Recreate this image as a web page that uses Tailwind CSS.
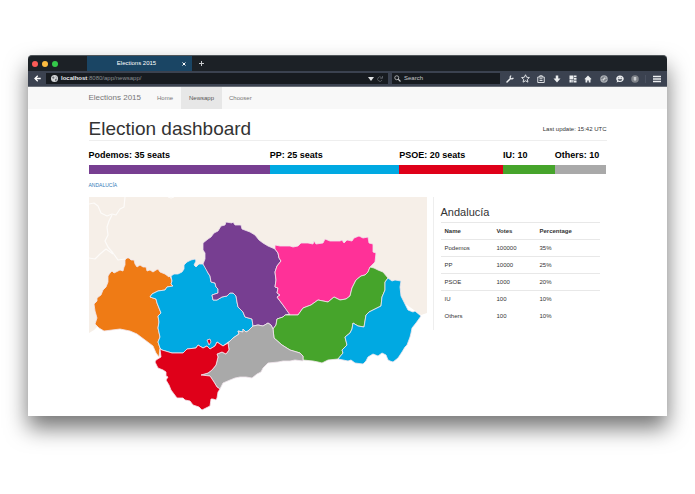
<!DOCTYPE html>
<html lang="en">
<head>
    <meta charset="UTF-8">
    <meta name="viewport" content="width=device-width, initial-scale=1.0">
    <title>Elections 2015</title>
    <script src="https://cdn.jsdelivr.net/npm/@tailwindcss/browser@4"></script>
</head>
<body class="bg-white font-['Liberation_Sans',sans-serif] text-[#333]">

    <div class="px-7 pt-[55px] pb-[78px]">
        <div class="bg-white rounded-t shadow-[0_12px_22px_rgba(0,0,0,0.55)]">

            <!-- Tab strip -->
            <div class="flex items-stretch h-4 bg-[#1c2126] rounded-t border-t border-[#50565a] text-white">
                <div class="flex items-center gap-1 pl-1 w-[59px]">
                    <button aria-label="Close window" class="size-1.5 rounded-full bg-[#fc5b57]"></button>
                    <button aria-label="Minimize window" class="size-1.5 rounded-full bg-[#fdbc40]"></button>
                    <button aria-label="Zoom window" class="size-1.5 rounded-full bg-[#34c84a]"></button>
                </div>
                <div class="flex items-center w-[105px] px-1.5 bg-[#1a4564]">
                    <span class="flex-1 pr-0.5 text-center text-[6px]">Elections 2015</span>
                    <button aria-label="Close tab">
                        <svg class="size-1" viewBox="0 0 8 8" stroke="currentColor" stroke-width="2"><path d="M1 1l6 6M7 1l-6 6"/></svg>
                    </button>
                </div>
                <button aria-label="New tab" class="px-[7px]">
                    <svg class="size-[5px]" viewBox="0 0 10 10" stroke="#c8cbcd" stroke-width="2"><path d="M5 0v10M0 5h10"/></svg>
                </button>
            </div>

            <!-- Toolbar -->
            <div class="flex items-center h-4 py-0.5 bg-[#3b4250] border-b border-[#6b7079] text-[6px] text-[#e8eaec]">
                <button aria-label="Back" class="flex justify-center w-[18px]">
                    <svg class="size-[7px]" viewBox="0 0 14 14" fill="none" stroke="white" stroke-width="2.6"><path d="M7.500 1.500L2 7l5.500 5.500M2 7h11.500"/></svg>
                </button>
                <div class="flex items-center flex-1 h-[11px] px-[5px] mr-1 bg-[#171b20]">
                    <svg class="size-[7px] mr-[3px]" viewBox="0 0 14 14"><circle cx="7" cy="7" r="7" fill="#d4d6d8"/><path d="M2 4l4-1 1 3-3 2zM8 8l4-1-1 4-3 1zM9 2l3 3-2 0z" fill="#6d7276"/></svg>
                    <label for="url" class="font-bold">localhost</label>
                    <input id="url" type="text" value=":8080/app/newsapp/" class="flex-1 min-w-0 text-[#8b8f93] outline-none">
                    <button aria-label="History">
                        <svg class="w-[6px] h-1" viewBox="0 0 12 8" fill="#e1e3e5"><path d="M0 0h12L6 8z"/></svg>
                    </button>
                    <button aria-label="Reload" class="ml-[3px]">
                        <svg class="size-[6px]" viewBox="0 0 12 12" fill="none" stroke="#6b7075" stroke-width="1.500"><path d="M10 8a4.500 4.500 0 1 1-1-5M11 0v4.500H6.500"/></svg>
                    </button>
                </div>
                <div class="flex items-center w-[108px] h-[11px] px-0.5 bg-[#171b20]">
                    <svg class="size-[7px] mr-[3px]" viewBox="0 0 14 14" fill="none" stroke="#c5c8ca" stroke-width="1.600"><circle cx="5.500" cy="5.500" r="4"/><path d="M8.500 8.500L13 13" stroke-width="2.200"/></svg>
                    <input type="search" aria-label="Search" placeholder="Search" class="flex-1 min-w-0 outline-none placeholder:text-[#c5c8ca]">
                </div>
                <div class="flex items-center w-[141px] ml-0.5 text-[#eceef0]">
                    <button aria-label="Developer tools" class="flex flex-1 justify-center">
                        <svg class="size-2" viewBox="0 0 16 16" fill="none" stroke="currentColor"><path d="M2 14l7-7" stroke-width="3" stroke-linecap="round"/><path d="M10.500 1.500a3.200 3.200 0 1 0 4 4" stroke-width="2.500"/></svg>
                    </button>
                    <button aria-label="Bookmark" class="flex flex-1 justify-center">
                        <svg class="size-[9px]" viewBox="0 0 18 18" fill="none" stroke="currentColor" stroke-width="1.800"><path d="M9 1.500l2.300 5 5.500.6-4.100 3.700 1.200 5.500L9 13.500l-4.900 2.800 1.200-5.500L1.200 7.100l5.500-.6z"/></svg>
                    </button>
                    <button aria-label="Bookmarks list" class="flex flex-1 justify-center">
                        <svg class="size-2" viewBox="0 0 16 16" fill="none" stroke="currentColor" stroke-width="1.800"><path d="M1.500 4h13v11h-13zM5.500 4V1.500h5V4M5 7.500h6M5 11h6"/></svg>
                    </button>
                    <button aria-label="Downloads" class="flex flex-1 justify-center">
                        <svg class="size-2" viewBox="0 0 16 16" fill="currentColor"><path d="M5.500 1h5v6H15l-7 8-7-8h4.500z"/></svg>
                    </button>
                    <button aria-label="Tab groups" class="flex flex-1 justify-center">
                        <svg class="size-2" viewBox="0 0 16 16" fill="currentColor"><path d="M1 1h8v7.500H1zM10 1h5v3h-5zM10 5.500h5v4h-5zM1 9.500h4.500V15H1zM6.500 9.500H9V15H6.500zM10 11h5v4h-5z"/></svg>
                    </button>
                    <button aria-label="Home" class="flex flex-1 justify-center">
                        <svg class="size-2" viewBox="0 0 16 16" fill="currentColor"><path d="M8 1l7 7-1.200 1.200L13 8.500V15H9.500v-4h-3v4H3V8.500l-.8.700L1 8z"/></svg>
                    </button>
                    <button aria-label="Edit page" class="flex flex-1 justify-center">
                        <svg class="size-2" viewBox="0 0 16 16"><circle cx="8" cy="8" r="7.500" fill="#a9adb2"/><path d="M4 12l8-8M3 8l5-5M8 13l5-5" stroke="#3b4250" stroke-width="1.500"/><path d="M5 11l6-6" stroke="white" stroke-width="1.500"/></svg>
                    </button>
                    <button aria-label="Chat" class="flex flex-1 justify-center">
                        <svg class="size-2" viewBox="0 0 16 16"><path d="M8 1c4.500 0 7.500 2.800 7.500 6.500S12.500 14 8 14c-1 0-2-.1-2.800-.4L1 15l1.300-3.200C1 10.700.5 9.200.5 7.500.5 3.800 3.500 1 8 1z" fill="currentColor"/><circle cx="5.500" cy="5.500" r="1.100" fill="#3b4250"/><circle cx="10.500" cy="5.500" r="1.100" fill="#3b4250"/><path d="M3.500 8.500h9c-.5 2-2.300 3.200-4.500 3.200S4 10.500 3.500 8.500z" fill="#3b4250"/></svg>
                    </button>
                    <button aria-label="Privacy" class="flex flex-1 justify-center">
                        <svg class="size-2" viewBox="0 0 16 16"><circle cx="8" cy="8" r="7.500" fill="#80848a"/><path d="M5.500 4h5v5L8 12.500 5.500 9z" fill="#c9ccd0"/></svg>
                    </button>
                </div>
                <button aria-label="Menu" class="flex justify-center w-[22px] ml-0.5 border-l border-[#4a5160]">
                    <svg class="size-2" viewBox="0 0 16 16" stroke="#eceef0" stroke-width="2.800"><path d="M0 3h16M0 8h16M0 13h16"/></svg>
                </button>
            </div>

            <!-- Site navigation -->
            <nav class="bg-[#f8f8f8] text-[#777]">
                <div class="flex items-stretch h-[22px] max-w-[518px] mx-auto text-[6px]">
                    <a href="#" class="flex items-center pr-2 text-[8px]">Elections 2015</a>
                    <a href="#" class="flex items-center px-2">Home</a>
                    <a href="#" class="flex items-center px-2 bg-[#e7e7e7] text-[#555]">Newsapp</a>
                    <a href="#" class="flex items-center px-[7px]">Chooser</a>
                </div>
            </nav>

            <main class="max-w-[518px] mx-auto pb-0.5">
                <header class="flex items-end justify-between pt-[9px] border-b border-[#eee]">
                    <h1 class="text-[19px] leading-[22px]">Election dashboard</h1>
                    <p class="pb-1.5 text-[6px] leading-[10px]">Last update: 15:42 UTC</p>
                </header>

                <!-- Seats -->
                <div class="grid grid-cols-[35fr_25fr_20fr_10fr_10fr] pt-2 text-[9px] leading-3 font-bold text-black whitespace-nowrap">
                    <div>Podemos: 35 seats<div class="h-[9px] mt-1 bg-[#773e91]"></div></div>
                    <div>PP: 25 seats<div class="h-[9px] mt-1 bg-[#00a9e2]"></div></div>
                    <div>PSOE: 20 seats<div class="h-[9px] mt-1 bg-[#df0019]"></div></div>
                    <div>IU: 10<div class="h-[9px] mt-1 bg-[#46a42b]"></div></div>
                    <div>Others: 10<div class="h-[9px] mt-1 bg-[#a9a9a9]"></div></div>
                </div>

                <a href="#" class="block mt-[7px] text-[5px] leading-2 text-[#337ab7]">ANDALUCÍA</a>

                <div class="flex items-start gap-1.5 mt-2">
                    <!-- Map of the provinces -->
                    <svg class="flex-1 min-w-0" viewBox="89 197 338 217" role="img" aria-label="Map of Andalucía" stroke-linejoin="round">
                        <path fill="#f6efe8" d="M89 197H427V313L421 315L400 300L160 310L97 327L94 330L89 333Z"/>
                        <g fill="none" stroke="#fff" stroke-width="1.200" stroke-opacity=".75">
                            <path d="M89 204L94 203L98 206L101 213L107 216L112 214L116 215L120 209L124 207L125 197"/>
                            <path d="M112 215L109 221L107 227L108 235L105 241L108 247L113 253L118 260L125 259"/>
                            <path d="M89 258L95 259L100 254L106 249L113 254"/>
                            <path d="M168 197L171 198L174 197"/>
                        </g>
                        <g stroke="#f1e6ee" stroke-width=".8">
                            <path fill="#ef7b15" d="M110 273L112 271L114 273L118 271L120 270L123 271L124 267L125 265L125 260L127 258L129 258L131 260L134 260L135 264L137 267L140 265L143 267L146 267L147 271L150 270L153 272L156 270L158 269L160 272L165 274L169 277L170 276L172 281L171 284L173 286L167 287L165 290L158 291L152 294L150 297L156 299L157 303L159 308L161 313L158 316L159 322L158 328L160 337L158 342L160 348L159 357L156 353L153 346L145 340L137 334L130 331L120 329L112 330L104 331L99 328L95 324L97 318L95 311L94 304L97 301L97 298L101 295L103 290L106 287L108 282L108 276Z"/>
                            <path fill="#00a9e2" d="M171 276L174 274L178 274L182 272L184 269L184 265L187 262L191 260L195 259L196 261L194 265L196 267L199 264L203 264L206 268L208 273L210 276L211 282L215 283L216 287L218 289L218 293L212 295L213 300L217 300L222 297L227 296L230 293L233 293L236 296L237 302L238 307L243 312L245 317L252 319L253 326L248 331L246 332L243 329L243 332L238 331L239 334L233 338L230 341L227 343L223 346L217 342L215 346L210 349L207 346L203 348L198 345L196 348L187 349L183 353L172 353L162 350L160 348L158 342L160 337L158 328L159 322L158 316L161 313L159 308L157 303L156 299L150 297L152 294L158 291L165 290L167 287L173 286L171 284L172 281Z"/>
                            <path fill="#773e91" d="M203 264L205 259L205 253L203 250L203 243L208 239L211 237L214 233L218 231L221 226L225 225L226 222L232 223L233 222L235 225L241 225L242 229L250 232L255 235L259 240L263 243L268 246L275 249L278 253L279 258L281 261L277 266L275 272L276 280L275 287L278 288L277 293L280 295L277 297L283 305L290 314L285 315L283 317L277 319L276 325L273 329L271 325L268 323L263 326L258 325L253 326L252 319L245 317L243 312L238 307L237 302L236 296L233 293L230 293L227 296L222 297L217 300L213 300L212 295L218 293L218 289L216 287L215 283L211 282L210 276L208 273Z"/>
                            <path fill="#ff3198" d="M275 249L275 245L280 246L290 246L293 247L298 246L301 243L308 243L313 244L314 241L316 244L323 243L325 239L330 241L340 241L342 240L344 243L347 240L352 241L354 238L359 236L363 238L368 237L369 243L373 244L373 252L376 253L375 262L370 267L368 272L365 275L361 276L356 280L352 288L350 296L346 299L340 300L334 297L328 302L318 300L311 305L303 308L298 315L290 315L283 305L277 297L280 295L277 293L278 288L275 287L276 280L275 272L277 266L281 261L279 258L278 253Z"/>
                            <path fill="#46a42b" d="M370 267L374 268L378 270L383 272L388 278L385 282L385 290L382 297L381 306L377 308L373 310L369 312L366 315L364 327L358 326L353 323L352 329L350 333L345 337L347 345L342 350L343 353L338 359L328 360L322 363L318 362L313 361L303 360L303 356L300 353L290 350L282 345L274 338L273 329L276 325L277 319L283 317L285 315L298 315L303 308L311 305L318 300L328 302L334 297L340 300L346 299L350 296L352 288L356 280L361 276L365 275L368 272Z"/>
                            <path fill="#00a9e2" d="M388 278L392 281L395 280L401 281L400 287L401 296L404 302L408 310L413 312L415 311L421 316L416 323L412 328L411 333L410 337L407 345L405 347L402 352L398 358L393 362L390 361L388 360L386 355L382 353L378 356L373 354L368 357L366 361L363 364L355 363L351 360L348 361L338 359L343 353L342 350L347 345L345 337L350 333L352 329L353 323L358 326L364 327L366 315L369 312L373 310L377 308L381 306L382 297L385 290L385 282Z"/>
                            <path fill="#a9a9a9" d="M228 343L230 341L233 338L239 334L238 331L243 332L243 329L246 332L248 331L253 326L258 325L263 326L268 323L271 325L273 329L274 338L282 345L290 350L300 353L303 356L303 361L295 360L290 361L283 361L278 362L268 363L263 368L261 372L257 374L252 378L246 377L240 377L235 378L230 380L223 383L220 389L217 387L214 382L210 376L201 375L208 373L212 370L216 365L218 357L217 354L222 352L226 354L229 350Z"/>
                            <path fill="#df0019" d="M160 349L162 350L172 353L183 353L187 349L196 348L198 345L203 348L207 346L210 349L215 346L217 342L223 346L228 343L229 350L226 354L222 352L217 354L218 357L216 365L212 370L208 373L201 375L210 376L214 382L217 387L220 389L218 392L217 398L216 400L213 399L211 399L210 406L206 408L202 410L199 407L193 405L190 401L185 400L183 398L177 398L174 394L171 390L169 385L166 380L168 377L166 376L166 372L163 370L158 368L155 362L156 360L161 357Z"/>
                            <path fill="#df0019" d="M207 340L210 339L211 342L209 345Z"/>
                        </g>
                    </svg>

                    <!-- Results -->
                    <aside class="w-[174px] h-[133px] pl-[7px] pr-[7px] border-l border-[#eee]">
                        <h2 class="pt-2 pb-[3px] text-[11px] leading-[14px]">Andalucía</h2>
                        <table class="w-full table-fixed text-left text-[6px] leading-2">
                            <thead>
                                <tr class="h-[17px] border-t border-[#e8e8e8]"><th class="w-[52px] pl-1">Name</th><th class="w-[47px] pl-1">Votes</th><th>Percentage</th></tr>
                            </thead>
                            <tbody>
                                <tr class="h-[17px] border-t border-[#e8e8e8]"><td class="pl-1">Podemos</td><td class="pl-1">100000</td><td>35%</td></tr>
                                <tr class="h-[17px] border-t border-[#e8e8e8]"><td class="pl-1">PP</td><td class="pl-1">10000</td><td>25%</td></tr>
                                <tr class="h-[17px] border-t border-[#e8e8e8]"><td class="pl-1">PSOE</td><td class="pl-1">1000</td><td>20%</td></tr>
                                <tr class="h-[17px] border-t border-[#e8e8e8]"><td class="pl-1">IU</td><td class="pl-1">100</td><td>10%</td></tr>
                                <tr class="h-[17px]"><td class="pl-1">Others</td><td class="pl-1">100</td><td>10%</td></tr>
                            </tbody>
                        </table>
                    </aside>
                </div>
            </main>
        </div>
    </div>

</body>
</html>
